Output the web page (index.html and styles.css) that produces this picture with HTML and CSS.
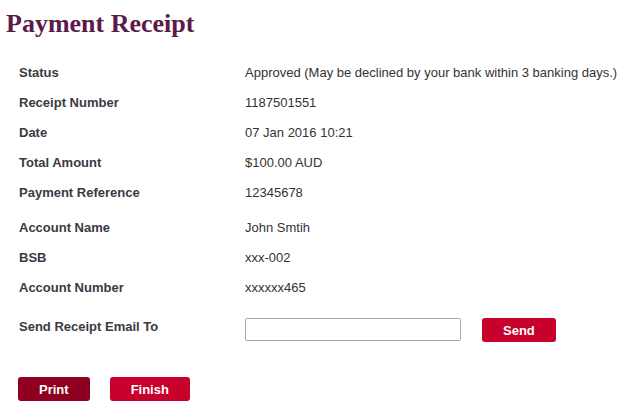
FILE: index.html
```html
<!DOCTYPE html>
<html lang="en">
<head>
<meta charset="UTF-8">
<meta name="viewport" content="width=device-width, initial-scale=1.0">
<title>Payment Receipt</title>
<link rel="stylesheet" href="styles.css">
</head>
<body>

<div class="receipt">
  <h1>Payment Receipt</h1>

  <div class="details">
    <div class="label">Status</div>
    <div class="value">Approved (May be declined by your bank within 3 banking days.)</div>
    <div class="label">Receipt Number</div>
    <div class="value">1187501551</div>
    <div class="label">Date</div>
    <div class="value">07 Jan 2016 10:21</div>
    <div class="label">Total Amount</div>
    <div class="value">$100.00 AUD</div>
    <div class="label">Payment Reference</div>
    <div class="value">12345678</div>
  </div>

  <div class="details account">
    <div class="label">Account Name</div>
    <div class="value">John Smtih</div>
    <div class="label">BSB</div>
    <div class="value">xxx-002</div>
    <div class="label">Account Number</div>
    <div class="value">xxxxxx465</div>
  </div>

  <div class="email-row">
    <label for="email" class="label">Send Receipt Email To</label>
    <div class="email-field">
      <input type="email" id="email">
      <button class="btn btn-red">Send</button>
    </div>
  </div>

  <div class="actions">
    <button class="btn btn-dark">Print</button>
    <button class="btn btn-red">Finish</button>
  </div>
</div>

</body>
</html>
```

FILE: styles.css
```css
body {
  margin: 0;
  font-family: "Liberation Sans", Arial, sans-serif;
  font-size: 13px;
  color: #333;
  background: #fff;
}
.receipt {
  padding-left: 6px;
}
.receipt h1 {
  margin: 9px 0 18px 0;
  font-family: "Liberation Serif", "Times New Roman", serif;
  font-size: 26px;
  line-height: 30px;
  font-weight: bold;
  color: #5b1a4a;
}
.details {
  display: grid;
  grid-template-columns: 226px 1fr;
  grid-auto-rows: 30px;
  align-items: center;
  padding-left: 13px;
}
.account {
  margin-top: 5px;
}
.label {
  font-weight: bold;
  color: #3a3a42;
}
.value {
  color: #333;
}
.email-row {
  display: grid;
  grid-template-columns: 226px 1fr;
  align-items: start;
  padding-left: 13px;
  margin-top: 16px;
}
.email-row .label {
  line-height: 18px;
}
.email-field {
  display: flex;
  gap: 21px;
}
.email-field input {
  width: 216px;
  height: 23px;
  box-sizing: border-box;
  border: 1px solid #a9a9a9;
  border-radius: 2px;
  padding: 2px 4px;
  margin: 0;
}
.btn {
  height: 24px;
  padding: 0 21px;
  border: none;
  border-radius: 3px;
  color: #fff;
  font-family: "Liberation Sans", Arial, sans-serif;
  font-size: 13px;
  font-weight: bold;
  cursor: pointer;
}
.btn-red {
  background-color: #c8002c;
}
.btn-dark {
  background-color: #8f0020;
}
.actions {
  display: flex;
  gap: 20px;
  padding-left: 12px;
  margin-top: 35px;
}
```
